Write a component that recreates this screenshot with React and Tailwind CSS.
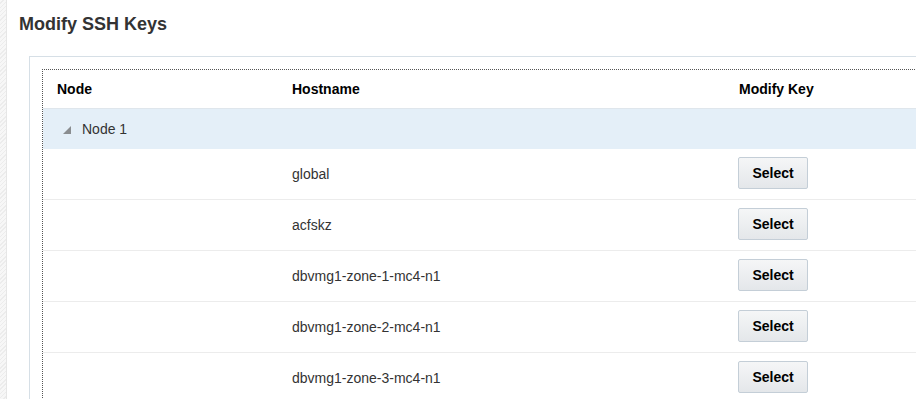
const hosts = [
  'global',
  'acfskz',
  'dbvmg1-zone-1-mc4-n1',
  'dbvmg1-zone-2-mc4-n1',
  'dbvmg1-zone-3-mc4-n1',
]

function SelectButton() {
  return (
    <button className="h-[32px] w-[70px] rounded-[2px] border border-[#c4ced7] bg-gradient-to-b from-[#f5f6f7] to-[#e4e7ea] text-[14px] font-bold text-black">
      Select
    </button>
  )
}

export default function App() {
  return (
    <div
      className="flex h-[399px] w-[916px] overflow-hidden bg-white text-[14px] text-[#333]"
      style={{ fontFamily: '"Liberation Sans", Arial, sans-serif' }}
    >
      {/* hatched gutter */}
      <div className="w-[7px] shrink-0 border-r border-[#e6e6e6] bg-[repeating-linear-gradient(135deg,#f7f7f7_0px,#f7f7f7_2px,#ececec_2px,#ececec_3px)]" />

      <div className="flex min-w-0 flex-1 flex-col">
        <h1 className="pl-[12px] pt-[12px] text-[18px] font-bold leading-[24px] text-[#333]">Modify SSH Keys</h1>

        {/* panel */}
        <div className="ml-[22px] mt-[20px] w-[1000px] flex-1 border-l border-t border-[#d6dfe6] pl-[12px] pt-[12px]">
          <div className="h-full border-l border-t border-dotted border-[#555]">
            {/* header */}
            <div className="grid h-[39px] grid-cols-[249px_446px_1fr] items-center border-b border-[#dfe6ec] font-bold text-black">
              <div className="pl-[14px]">Node</div>
              <div>Hostname</div>
              <div className="pl-[1px]">Modify Key</div>
            </div>

            {/* node group row */}
            <div className="flex h-[40px] items-center bg-[#e4eff8] pl-[20px]">
              <svg width="8" height="8" viewBox="0 0 8 8" className="mr-[11px] mt-[2px]">
                <polygon points="8,0 8,8 0,8" fill="#8a8d90" />
              </svg>
              <span>Node 1</span>
            </div>

            {hosts.map((h) => (
              <div
                key={h}
                className="grid h-[51px] grid-cols-[249px_446px_1fr] items-center border-b border-[#ececec]"
              >
                <div />
                <div>{h}</div>
                <div className="pb-[2px]">
                  <SelectButton />
                </div>
              </div>
            ))}
          </div>
        </div>
      </div>
    </div>
  )
}
